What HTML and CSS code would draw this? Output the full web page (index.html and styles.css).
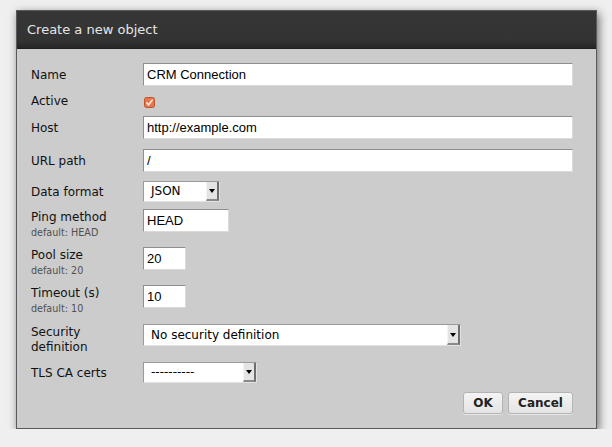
FILE: index.html
```html
<!DOCTYPE html>
<html>
<head>
<meta charset="utf-8">
<title>Create a new object</title>
<link rel="stylesheet" href="styles.css">
</head>
<body>
<div class="dialog">
  <div class="dialog-header">Create a new object</div>
  <form class="dialog-body">
    <div class="row r-name">
      <label class="label">Name</label>
      <input class="text w-full" type="text" value="CRM Connection">
    </div>
    <div class="row r-active">
      <label class="label">Active</label>
      <span class="check">
        <svg width="11" height="11" viewBox="0 0 11 11">
          <rect x="0.5" y="0.5" width="10" height="10" rx="2" fill="#e8764c" stroke="#c0532c"/>
          <path d="M2.5 5.6 L4.6 7.8 L8.6 2.6" fill="none" stroke="#fff3ea" stroke-width="1.5"/>
        </svg>
      </span>
    </div>
    <div class="row r-host">
      <label class="label">Host</label>
      <input class="text w-full" type="text" value="http://example.com">
    </div>
    <div class="row r-url">
      <label class="label">URL path</label>
      <input class="text w-full" type="text" value="/">
    </div>
    <div class="row r-data">
      <label class="label">Data format</label>
      <span class="select w-data"><span class="select-value">JSON</span><span class="select-btn"><i class="tri"></i></span></span>
    </div>
    <div class="row top r-ping">
      <div class="label">Ping method<small>default: HEAD</small></div>
      <input class="text w-ping" type="text" value="HEAD">
    </div>
    <div class="row top r-pool">
      <div class="label">Pool size<small>default: 20</small></div>
      <input class="text w-num" type="text" value="20">
    </div>
    <div class="row top r-timeout">
      <div class="label">Timeout (s)<small>default: 10</small></div>
      <input class="text w-num" type="text" value="10">
    </div>
    <div class="row top r-sec">
      <div class="label">Security<br>definition</div>
      <span class="select w-sec"><span class="select-value">No security definition</span><span class="select-btn"><i class="tri"></i></span></span>
    </div>
    <div class="row r-tls">
      <label class="label">TLS CA certs</label>
      <span class="select w-tls"><span class="select-value">----------</span><span class="select-btn"><i class="tri"></i></span></span>
    </div>
    <div class="buttons">
      <button type="button" class="btn btn-ok">OK</button>
      <button type="button" class="btn btn-cancel">Cancel</button>
    </div>
  </form>
</div>
</body>
</html>
```

FILE: styles.css
```css
html, body {
  margin: 0;
  padding: 0;
}
body {
  background: #efefef;
  font-family: "DejaVu Sans", sans-serif;
  font-size: 12px;
  color: #111;
  padding: 10px 0 0 16px;
}
.dialog {
  width: 581px;
  height: 419px;
  box-sizing: border-box;
  background: #cccccc;
  border: 1px solid #5a5a5a;
  box-shadow: 2px 3px 9px rgba(0, 0, 0, 0.55);
}
.dialog-header {
  height: 37px;
  line-height: 37px;
  padding-left: 10px;
  background: linear-gradient(#363636, #333 80%, #262626);
  color: #e6e6e6;
  font-size: 13px;
  border-bottom: 1px solid #1e1e1e;
}
.dialog-body {
  margin: 0;
  padding: 14px 23px 0 14px;
}
.row {
  display: flex;
  align-items: center;
}
.row.top {
  align-items: flex-start;
}
.label {
  width: 112px;
  flex: none;
  line-height: 15px;
  padding-top: 1px;
  color: #111;
}
.row.top .label {
  padding-top: 2px;
}
.label small {
  display: block;
  font-size: 9.6px;
  line-height: 13px;
  color: #505050;
  margin-top: 1px;
}
.row.top .text,
.row.top .select {
  margin-top: 1px;
}
.r-active { margin-top: 4px; height: 22px; }
.r-host { margin-top: 4px; }
.r-url { margin-top: 10px; }
.r-data { margin-top: 9px; }
.r-ping { margin-top: 6px; height: 30px; }
.r-pool { margin-top: 8px; height: 30px; }
.r-timeout { margin-top: 8px; height: 31px; }
.r-sec { margin-top: 8px; height: 30px; }
.r-tls { margin-top: 9px; }
.r-sec .select { margin-top: 0; }

.text {
  box-sizing: border-box;
  height: 23px;
  margin: 0;
  padding: 0 3px;
  border: 1px solid;
  border-color: #8e8e8e #dadada #dadada #8e8e8e;
  background: #fff;
  font-family: "Liberation Sans", Arial, sans-serif;
  font-size: 13px;
  color: #000;
  outline: none;
}
.w-full { width: 430px; }
.w-ping { width: 86px; }
.w-num { width: 43px; }

.check {
  display: flex;
  margin: 2px 0 0 1px;
}

.select {
  display: flex;
  box-sizing: border-box;
  height: 21px;
  background: #fff;
  border: 1px solid;
  border-color: #9a9a9a #e2e2e2 #e2e2e2 #9a9a9a;
}
.select-value {
  flex: 1;
  padding-left: 7px;
  line-height: 19px;
  font-size: 12px;
  color: #000;
  white-space: nowrap;
  overflow: hidden;
}
.select-btn {
  flex: none;
  width: 13px;
  box-sizing: border-box;
  display: flex;
  align-items: center;
  justify-content: center;
  background: #e4e4e4;
  border-left: 1px solid #f4f4f4;
  border-right: 2px solid #6e6e6e;
  border-bottom: 2px solid #8a8a8a;
}
.tri {
  display: block;
  width: 0;
  height: 0;
  border-left: 3px solid transparent;
  border-right: 3px solid transparent;
  border-top: 4px solid #000;
  margin-top: 1px;
}
.w-data { width: 77px; }
.w-sec { width: 318px; height: 22px; }
.w-sec .select-value { line-height: 20px; }
.w-tls { width: 114px; }

.buttons {
  display: flex;
  justify-content: flex-end;
  gap: 5px;
  margin-top: 9px;
}
.btn {
  height: 22px;
  box-sizing: border-box;
  padding: 0;
  font-family: "DejaVu Sans", sans-serif;
  font-weight: bold;
  font-size: 12px;
  color: #222;
  background: linear-gradient(#f4f4f4, #e4e4e4);
  border: 1px solid #b4b4b4;
  border-radius: 3px;
  box-shadow: 0 1px 0 rgba(255,255,255,0.5);
}
.btn-ok { width: 40px; }
.btn-cancel { width: 65px; }
```
